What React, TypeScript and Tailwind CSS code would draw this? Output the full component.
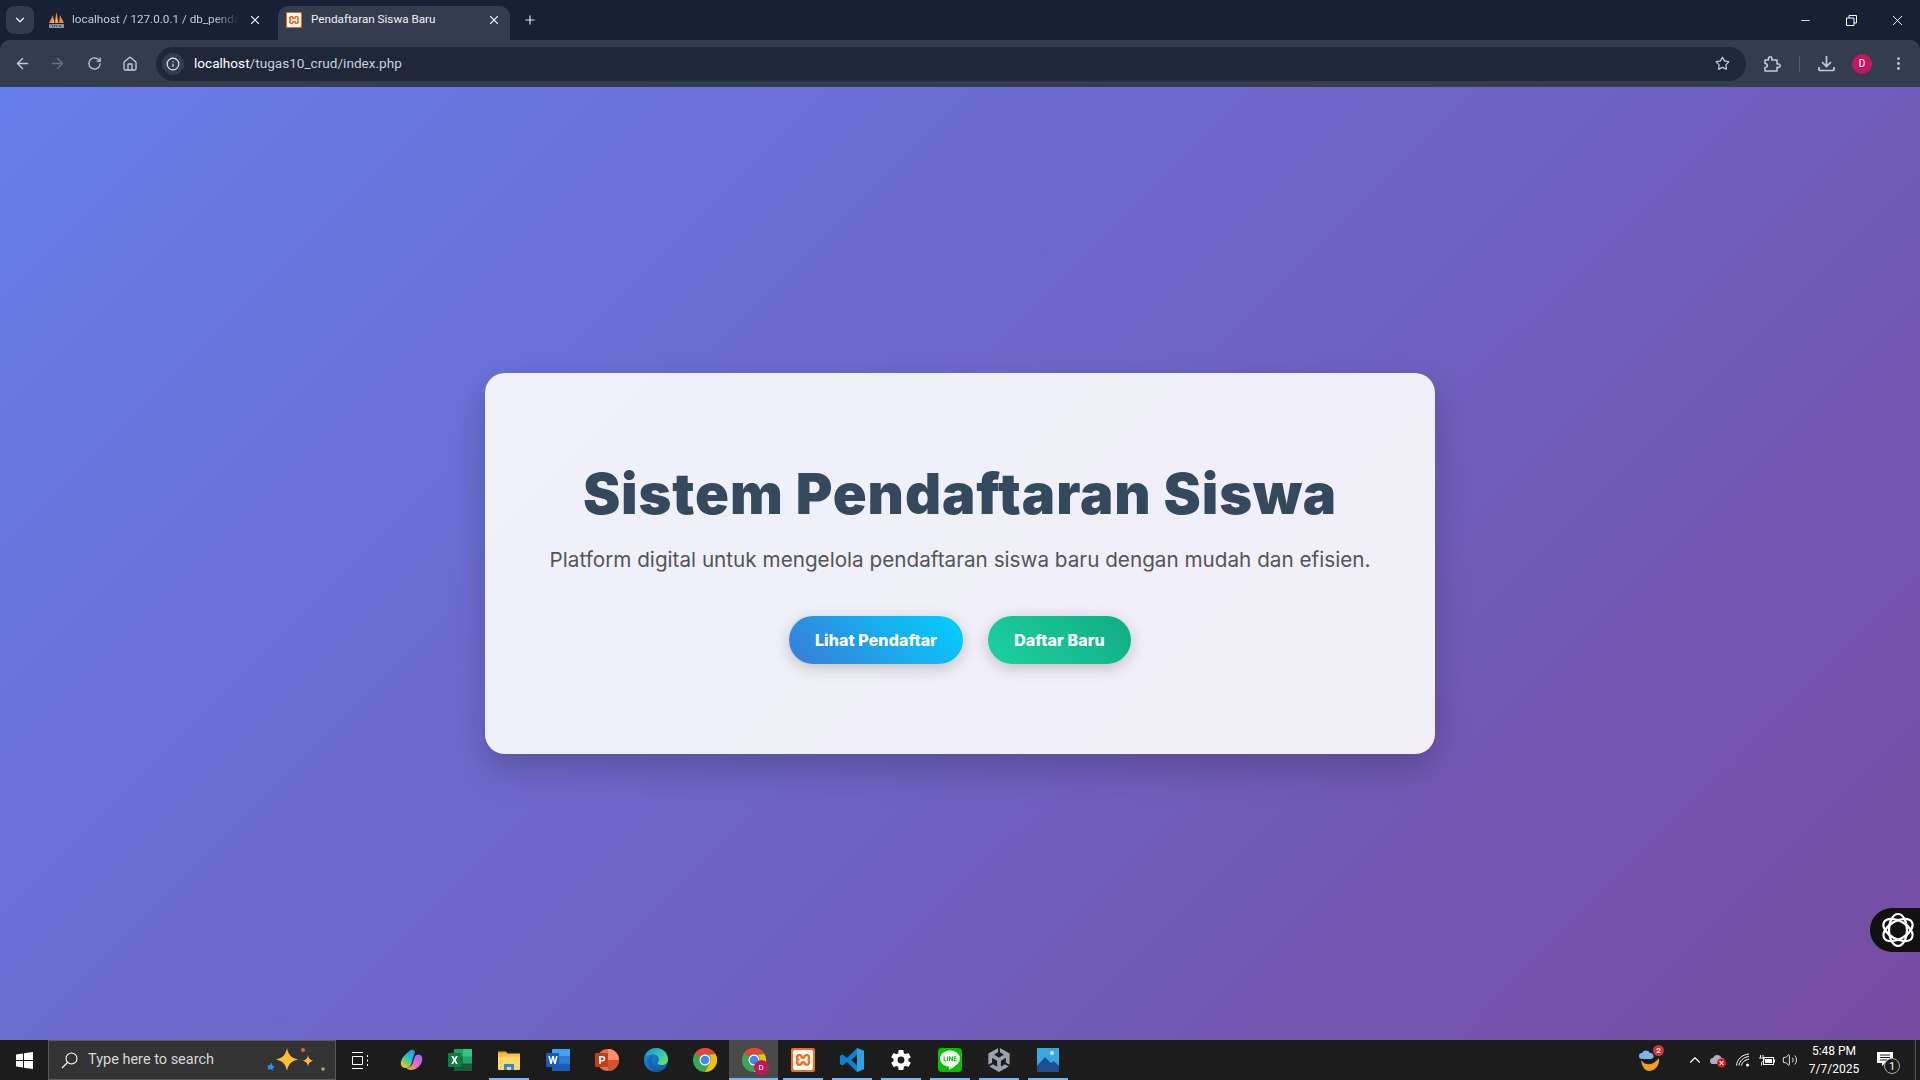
import { ArrowLeft, ArrowRight, ChevronDown, ChevronUp, EllipsisVertical, Home, Info, Minus, Plus, RotateCw, Star, Volume2, X } from 'lucide-react';
import { SiLine, SiUnity, SiXampp } from 'react-icons/si';
import { IoSettingsSharp } from 'react-icons/io5';
import type { ReactNode } from 'react';

const WinLogo = () => (
  <svg width="17" height="17" viewBox="0 0 17 17" fill="#fff">
    <path d="M0 2.400 7 1.400V8H0zM8 1.300 17 0V8H8zM0 9h7v6.600L0 14.600zM8 9h9v8L8 15.700z" />
  </svg>
);

const SearchGlass = () => (
  <svg width="17" height="17" viewBox="0 0 17 17" fill="none" stroke="#fff" strokeWidth="1.100">
    <circle cx="10.500" cy="6.500" r="5.500" />
    <path d="M6.500 10.500 1 16" />
  </svg>
);

const PmaIcon = () => (
  <svg width="17" height="17" viewBox="0 0 17 17">
    <path d="M1 11 5 3l1 8zM6.500 11 8.500 0l2 11zM11 11l1-8 4 8z" fill="#f08a24" />
    <path d="M4 11l1.500-5 .5 5zM8 11l.5-7 1 7z" fill="#f9c27d" />
    <rect x="1" y="12" width="15" height="4" rx="0.500" fill="#8d93a0" />
    <path d="M2.500 13h2v2M6.500 15v-2l1 1 1-1v2M11 15l1-2 1 2" stroke="#2d3340" strokeWidth="0.600" fill="none" />
  </svg>
);

const Sparkles = () => (
  <svg width="62" height="30" viewBox="0 0 62 30">
    <path d="M23 3c1.500 7 4 10 11 11.500-7 1.500-9.500 4.500-11 11.500-1.500-7-4-10-11-11.500 7-1.500 9.500-4.500 11-11.500z" fill="#fbc02d" />
    <path d="M44 10c.6 3.500 2 5 5.500 5.700-3.500.7-4.900 2.200-5.500 5.800-.6-3.600-2-5.100-5.500-5.800 3.500-.7 4.900-2.200 5.500-5.700z" fill="#fbc02d" />
    <path d="M3 21l3-1 1.500-2.500.8 3 2.700 1-2.300 1.500.2 3-2.400-2-3 .8 1-2.500z" fill="#1e9be8" />
    <circle cx="39" cy="5" r="2" fill="#e8642b" />
    <circle cx="59" cy="24" r="1.800" fill="#8cc63f" />
  </svg>
);

const TaskViewIcon = () => (
  <svg width="17" height="17" viewBox="0 0 17 17" fill="none" stroke="#fff" strokeWidth="1">
    <path d="M0 .5h11M0 16.500h11M.5 4.500h10v8H.5zM15.500 3v2M15.500 7.500v2M15.500 12v2" />
  </svg>
);

const CopilotIcon = () => (
  <svg width="24" height="24" viewBox="0 0 24 24">
    <defs>
      <linearGradient id="cop1" x1="0.8" y1="0" x2="0.2" y2="1">
        <stop offset="0" stopColor="#2b8ff0" />
        <stop offset="0.45" stopColor="#27c4c8" />
        <stop offset="0.8" stopColor="#9ed03a" />
        <stop offset="1" stopColor="#f6c42a" />
      </linearGradient>
      <linearGradient id="cop2" x1="0.6" y1="0" x2="0.3" y2="1">
        <stop offset="0" stopColor="#a66be8" />
        <stop offset="0.55" stopColor="#e868c0" />
        <stop offset="1" stopColor="#f8a04c" />
      </linearGradient>
    </defs>
    <path d="M10 3.500c1.500-2 5-2.500 6 0l-3 11c-.8 3-3.200 5.500-6.500 5.500-3.500 0-5.500-3-4.500-6.500C3 9.500 6.500 6 10 3.500z" fill="url(#cop1)" />
    <path d="M16 8c2-1.500 5-2 6.500 0 1.500 2.200.8 5.500-.7 8-1.800 3-5.800 6-9.800 6-2.300 0-4-1-4.800-2.500 2.800.4 5.500-1 6.800-5z" fill="url(#cop2)" />
    <path d="M13.500 9.500 16 8l-2.500 7c-.5 1.500-1.500 3-2.700 3.800 1-1.500 1.700-3.300 2.100-5z" fill="#3b2a9c" opacity="0.7" />
  </svg>
);

const ExcelIcon = () => (
  <svg width="24" height="24" viewBox="0 0 24 24">
    <rect x="6" y="1" width="18" height="22" rx="1" fill="#21a366" />
    <rect x="15" y="1" width="9" height="7.500" fill="#33c481" />
    <rect x="6" y="8" width="9" height="7.500" fill="#107c41" />
    <rect x="15" y="15.500" width="9" height="7.500" fill="#185c37" />
    <rect x="6" y="15.500" width="9" height="7.500" fill="#185c37" />
    <rect x="0" y="5" width="13" height="14" rx="1" fill="#107c41" />
    <path d="M3.300 8h2l1.300 2.500L8 8h1.900l-2.200 4 2.200 4H7.900l-1.400-2.600L5.100 16H3.200l2.200-4z" fill="#fff" />
  </svg>
);

const FolderIcon = () => (
  <svg width="24" height="24" viewBox="0 0 24 24">
    <path d="M1 3.500h8l2 2.500h-10z" fill="#e0a526" />
    <rect x="1" y="6" width="22" height="16" rx="1" fill="#fcd866" />
    <rect x="1" y="5.500" width="22" height="3" fill="#f5c242" />
    <path d="M7 22v-6h10v6h-3v-3h-4v3z" fill="#2b8fd6" />
  </svg>
);

const WordIcon = () => (
  <svg width="24" height="24" viewBox="0 0 24 24">
    <rect x="6" y="1" width="18" height="22" rx="1" fill="#41a5ee" />
    <rect x="6" y="8" width="18" height="7.500" fill="#2b7cd3" />
    <rect x="6" y="15.500" width="18" height="7.500" fill="#185abd" />
    <rect x="0" y="5" width="13" height="14" rx="1" fill="#185abd" />
    <path d="M2.300 8h1.700l1 5 1.200-5h1.500l1.200 5 1-5h1.700l-1.900 8H8.100L6.900 11l-1.200 5H4.200z" fill="#fff" />
  </svg>
);

const PowerPointIcon = () => (
  <svg width="24" height="24" viewBox="0 0 24 24">
    <circle cx="13" cy="12" r="11" fill="#ed6c47" />
    <path d="M13 1a11 11 0 0 1 11 11H13z" fill="#ff8f6b" />
    <path d="M13 12h11a11 11 0 0 1-11 11z" fill="#d35230" />
    <rect x="0" y="5" width="13" height="14" rx="1" fill="#c43e1c" />
    <path d="M4 8h3.300c2 0 3 1 3 2.700s-1.100 2.800-3 2.800H5.700V16H4zm1.700 1.400v2.700h1.300c1 0 1.500-.5 1.500-1.350S8 9.400 7 9.400z" fill="#fff" />
  </svg>
);

const EdgeIcon = () => (
  <svg width="24" height="24" viewBox="0 0 24 24">
    <defs>
      <linearGradient id="edge1" x1="0" y1="0" x2="1" y2="0.800">
        <stop offset="0" stopColor="#1a8fd8" />
        <stop offset="0.6" stopColor="#34c8b0" />
        <stop offset="1" stopColor="#6fe060" />
      </linearGradient>
      <linearGradient id="edge2" x1="0" y1="0" x2="0.7" y2="1">
        <stop offset="0" stopColor="#1f8fdc" />
        <stop offset="1" stopColor="#0f5fae" />
      </linearGradient>
    </defs>
    <circle cx="12" cy="12" r="12" fill="url(#edge2)" />
    <path d="M.6 9C2.300 3.500 7 0 12 0c7 0 12 5 12 11.500 0 3.500-3 5.500-6.500 5.500-2.500 0-4-.8-4-2 0-.9 1.500-1.300 1.500-3.300C15 8.500 12.500 6.500 9.500 6.500 5.500 6.500 2.500 7 .6 9z" fill="url(#edge1)" />
    <path d="M9.500 6.500c-3.500 1-5.500 4.500-5 8.500.6 5 4.500 8.500 9.500 8.800 2.500-.3 4.700-1.500 6.500-3.300-1.500.6-3 .8-4.500.5-4.500-.5-8-4-8-8 0-2.500 1-4.800 1.500-6.500z" fill="#0b4d96" opacity="0.35" />
  </svg>
);

const ChromeIcon = () => (
  <svg width="24" height="24" viewBox="0 0 24 24">
    <circle cx="12" cy="12" r="12" fill="#34a853" />
    <path d="M12 0a12 12 0 0 1 10.400 6H12a6 6 0 0 0-5.600 3.800L2.300 5A12 12 0 0 1 12 0z" fill="#ea4335" />
    <path d="M22.400 6A12 12 0 0 1 12 24l4.700-8.500A6 6 0 0 0 16 7z" fill="#fbbc04" />
    <circle cx="12" cy="12" r="5.500" fill="#fff" />
    <circle cx="12" cy="12" r="4.300" fill="#4285f4" />
  </svg>
);

const VsCodeIcon = () => (
  <svg width="24" height="24" viewBox="0 0 24 24">
    <path d="M17 0l7 3v18l-7 3-10-10-4.500 3.500L0 16V8l2.500-1.500L7 10zm0 6.500L11.500 12 17 17.500z" fill="#0a84d0" />
    <path d="M17 0l7 3v18l-7 3z" fill="#2aa3ea" />
  </svg>
);

const PhotosIcon = () => (
  <svg width="24" height="24" viewBox="0 0 24 24">
    <rect width="22" height="24" x="1" fill="#38a8e0" />
    <circle cx="16" cy="5" r="2" fill="#d8f0fb" />
    <path d="M1 18l8-9 6 6 3-2 5 5v6H1z" fill="#1c4f91" />
  </svg>
);

const Weather = () => (
  <span className="relative flex h-6 w-6 items-center justify-center">
    <svg width="24" height="24" viewBox="0 0 24 24">
      <path d="M3 12c4 6 12 6 18-2 1 7-4 13-10 13-4 0-7-4-8-11z" fill="#f59a23" />
      <path d="M1 8a3 3 0 0 1 3-3 4.500 4.500 0 0 1 8 0 3 3 0 0 1 1 6H4a3 3 0 0 1-3-3z" fill="#7fb4e8" />
    </svg>
    <span className="absolute top-[-3px] right-[-2px] flex h-[11px] w-[11px] items-center justify-center rounded-full bg-[#d13438] text-[8px] leading-none font-bold text-white">2</span>
  </span>
);

const CloudOff = () => (
  <svg width="18" height="16" viewBox="0 0 18 16">
    <path d="M1 9a3 3 0 0 1 3-3 4.500 4.500 0 0 1 8.500 0 3 3 0 0 1 .5 6H3a3 3 0 0 1-2-3z" fill="#aab0b8" />
    <circle cx="12.500" cy="11" r="4.500" fill="#e81123" />
    <path d="M10.700 9.200l3.600 3.600M14.300 9.200l-3.600 3.600" stroke="#fff" strokeWidth="1.200" />
  </svg>
);

const WifiArcs = () => (
  <svg width="14" height="14" viewBox="0 0 14 14" fill="none" stroke="#fff" strokeWidth="1">
    <path d="M.5 12.500C1 6.500 6 1.500 13 1M3 12.500C3.500 8 7.500 4 13 3.600M5.500 12.500C6 9.500 8.500 6.800 13 6.300" />
    <circle cx="11.500" cy="12" r="1.500" fill="#fff" stroke="none" />
  </svg>
);

const Battery = () => (
  <svg width="17" height="11" viewBox="0 0 17 11" fill="none" stroke="#fff">
    <path d="M2.500 0v3M5 0v3M1 3h5v2.500L3.500 7.500v3" strokeWidth="0.900" />
    <rect x="5.500" y="2.500" width="10" height="7" />
    <rect x="7" y="4" width="7" height="4" fill="#fff" stroke="none" />
    <path d="M16.500 4.500v3" />
  </svg>
);

const NotificationIcon = () => (
  <span className="relative flex h-6 w-6 items-center justify-center">
    <svg width="16" height="15" viewBox="0 0 16 15" className="mb-[2px]">
      <path d="M0 0h16v11H8l-3 3v-3H0z" fill="#fff" />
      <path d="M3 3h10M3 5.500h10M3 8h7" stroke="#1c1c1c" />
    </svg>
    <span className="absolute right-[-3px] bottom-[-2px] flex h-[16px] w-[16px] items-center justify-center rounded-full border border-[#aaa] bg-[#1c1c1c] text-[11px] leading-none text-white">1</span>
  </span>
);

const PuzzleOutline = () => (
  <svg width="18" height="18" viewBox="0 0 18 18" fill="none" stroke="#c3cbd9" strokeWidth="1.600" strokeLinejoin="round">
    <path d="M2 5h3.500V3.500a1.700 1.700 0 0 1 3.400 0V5H14v4h1.500a1.700 1.700 0 0 1 0 3.400H14V16H2v-3.500c1.500 0 2.300-.8 2.300-2S3.500 8.500 2 8.500z" />
  </svg>
);

const DownloadTray = () => (
  <svg width="17" height="17" viewBox="0 0 17 17" fill="none" stroke="#c3cbd9" strokeWidth="1.700">
    <path d="M8.500 1v10M4 7l4.500 4.500L13 7M1 12v2.500c0 .6.400 1 1 1h13c.6 0 1-.4 1-1V12" />
  </svg>
);

const WidgetIcon = () => (
  <svg width="36" height="36" viewBox="0 0 36 36" fill="none" stroke="#fff" strokeWidth="2.200">
    <ellipse cx="18" cy="18" rx="9" ry="16" />
    <ellipse cx="18" cy="18" rx="9" ry="16" transform="rotate(60 18 18)" />
    <ellipse cx="18" cy="18" rx="9" ry="16" transform="rotate(120 18 18)" />
  </svg>
);

const TaskItem = ({ children, running, active }: { children: ReactNode; running?: boolean; active?: boolean }) => (
  <div className={`relative flex h-10 w-[49px] items-center justify-center ${active ? 'bg-[#4a4a4a]' : ''}`}>
    {children}
    {running && <div className={`absolute bottom-0 h-[2px] bg-[#76b9ed] ${active ? 'inset-x-0' : 'inset-x-[4.5px]'}`} />}
  </div>
);

export default function App() {
  return (
    <div className="relative flex h-screen w-full flex-col overflow-hidden bg-[#172136] font-['Roboto',sans-serif]">
      {/* tab strip */}
      <div className="flex h-10 shrink-0 items-end pl-[6px] text-[#e3e8f0]">
        <div className="mb-[6px] flex h-7 w-7 items-center justify-center rounded-lg bg-[#323c4e]">
          <ChevronDown size={14} strokeWidth={2.500} />
        </div>
        <div className="ml-[2px] flex h-[34px] w-[242px] items-center pr-[14px] pb-[6px] pl-[12px]">
          <PmaIcon />
          <span className="ml-[7px] w-[167px] overflow-hidden text-[11.700px] whitespace-nowrap text-[#c4cad4] [mask-image:linear-gradient(90deg,#000_85%,transparent)]">localhost / 127.0.0.1 / db_pendaftaran</span>
          <X size={14} strokeWidth={2} className="ml-[9px]" />
        </div>
        <div className="flex h-[34px] w-[232px] items-center rounded-t-[10px] bg-[#343d4e] pr-[9px] pb-[6px] pl-[8px]">
          <span className="flex h-4 w-4 items-center justify-center rounded-[1px] bg-[#e8701f]">
            <SiXampp size={14} className="text-white" />
          </span>
          <span className="ml-[9px] flex-1 text-[11.700px] whitespace-nowrap text-[#eef1f6]">Pendaftaran Siswa Baru</span>
          <X size={14} strokeWidth={2} />
        </div>
        <div className="mb-[12px] ml-[13px] flex w-[14px] items-center justify-center">
          <Plus size={16} strokeWidth={2} />
        </div>
        <div className="ml-auto flex h-10 items-center text-white">
          <div className="flex w-[46px] justify-center"><Minus size={13} strokeWidth={1.500} /></div>
          <div className="flex w-[46px] justify-center">
            <svg width="11" height="11" viewBox="0 0 11 11" fill="none" stroke="#fff">
              <path d="M.5 3h7.500v7.500H.5zM3 3V.5h7.500V8H8" />
            </svg>
          </div>
          <div className="flex w-[46px] justify-center"><X size={17} strokeWidth={1.300} /></div>
        </div>
      </div>

      {/* toolbar */}
      <div className="flex h-[47px] shrink-0 items-center rounded-t-[10px] bg-[#343d4e] text-[#c3cbd9]">
        <div className="flex w-[156px] shrink-0 items-center">
          <ArrowLeft size={17} className="ml-[14px]" />
          <ArrowRight size={17} className="ml-[18px] text-[#69717f]" />
          <RotateCw size={15} className="ml-[21px]" />
          <Home size={16} className="ml-[20px]" />
        </div>
        <div className="flex h-[34px] w-[1590px] shrink-0 items-center rounded-full bg-[#1e2838] pr-4 pl-[6px]">
          <span className="flex h-[22px] w-[22px] items-center justify-center rounded-full bg-[#343d4e]">
            <Info size={14} className="text-[#e3e8f0]" />
          </span>
          <span className="ml-[10px] text-[13.600px] text-[#c9cfd9]"><span className="text-white">localhost</span>/tugas10_crud/index.php</span>
          <Star size={15} className="ml-auto" strokeWidth={2} />
        </div>
        <span className="ml-[17px] flex"><PuzzleOutline /></span>
        <div className="ml-[18px] h-4 w-px bg-[#566072]" />
        <span className="ml-[18px] flex"><DownloadTray /></span>
        <span className="ml-[17px] flex h-5 w-5 items-center justify-center rounded-full bg-[#c2185b] text-[10px] text-white">D</span>
        <EllipsisVertical size={17} className="ml-[18px]" />
      </div>

      {/* page */}
      <main className="flex min-h-0 flex-1 items-center justify-center bg-[linear-gradient(135deg,#667eea,#764ba2)] font-['Inter',sans-serif]">
        <div className="flex h-[381px] w-[950px] flex-col items-center rounded-[20px] bg-white/90 pt-[87px] shadow-[0_15px_35px_rgba(0,0,0,0.2)]">
          <h1 className="text-[56px] leading-[68px] font-black tracking-[0.9px] text-[#34495e]">Sistem Pendaftaran Siswa</h1>
          <p className="mt-[16px] text-[20.700px] leading-[32px] text-[#555]">Platform digital untuk mengelola pendaftaran siswa baru dengan mudah dan efisien.</p>
          <div className="mt-[40px] flex gap-[25px]">
            <a className="flex h-12 w-[174px] items-center justify-center rounded-full bg-[linear-gradient(45deg,#3a7bd5,#00d2ff)] text-[16px] font-extrabold tracking-[0.1px] text-white shadow-[0_4px_15px_rgba(0,0,0,0.2)]">Lihat Pendaftar</a>
            <a className="flex h-12 w-[143px] items-center justify-center rounded-full bg-[linear-gradient(45deg,#1dd1a1,#10ac84)] text-[16px] font-extrabold tracking-[0.1px] text-white shadow-[0_4px_15px_rgba(0,0,0,0.2)]">Daftar Baru</a>
          </div>
        </div>
      </main>

      {/* floating widget */}
      <div className="absolute top-[908px] right-0 flex h-[44px] w-[50px] items-center rounded-l-[22px] bg-[#111] pl-[10px]">
        <WidgetIcon />
      </div>

      {/* taskbar */}
      <div className="flex h-10 shrink-0 items-center bg-[#1c1c1c] text-white">
        <div className="flex w-[48px] justify-center"><WinLogo /></div>
        <div className="flex h-10 w-[288px] items-center border border-[#5a5a5a] bg-[#333] pr-[9px] pl-[12px]">
          <SearchGlass />
          <span className="ml-[10px] text-[14.500px] text-[#d8d8d8]">Type here to search</span>
          <span className="ml-auto"><Sparkles /></span>
        </div>
        <div className="flex">
          <TaskItem><TaskViewIcon /></TaskItem>
          <div className="flex pl-[1px]">
            <TaskItem><CopilotIcon /></TaskItem>
            <TaskItem><ExcelIcon /></TaskItem>
            <TaskItem running><FolderIcon /></TaskItem>
            <TaskItem><WordIcon /></TaskItem>
            <TaskItem><PowerPointIcon /></TaskItem>
            <TaskItem><EdgeIcon /></TaskItem>
            <TaskItem><ChromeIcon /></TaskItem>
            <TaskItem running active>
              <span className="relative flex">
                <ChromeIcon />
                <span className="absolute right-[-3px] bottom-[-3px] flex h-[15px] w-[15px] items-center justify-center rounded-full bg-[#c2185b] text-[8px] text-white">D</span>
              </span>
            </TaskItem>
            <TaskItem running>
              <span className="flex h-6 w-6 items-center justify-center rounded-[2px] bg-[#f0701f]"><SiXampp size={20} className="text-white" /></span>
            </TaskItem>
            <TaskItem running><VsCodeIcon /></TaskItem>
            <TaskItem running><IoSettingsSharp size={22} className="text-white" /></TaskItem>
            <TaskItem running>
              <span className="flex h-6 w-6 items-center justify-center rounded-[4px] bg-[#06c100]"><SiLine size={20} className="text-white" /></span>
            </TaskItem>
            <TaskItem running><SiUnity size={24} className="text-[#9aa3ad]" /></TaskItem>
            <TaskItem running><PhotosIcon /></TaskItem>
          </div>
        </div>
        <div className="ml-auto flex h-10 items-center">
          <Weather />
          <ChevronUp size={18} strokeWidth={1.500} className="ml-[24px]" />
          <span className="ml-[5px]"><CloudOff /></span>
          <span className="ml-[9px] flex"><WifiArcs /></span>
          <span className="ml-[8px] flex"><Battery /></span>
          <Volume2 size={16} strokeWidth={1.300} className="ml-[7px]" />
          <div className="ml-[13px] flex w-[46px] flex-col items-center text-[12px] leading-[18px] whitespace-nowrap">
            <span>5:48 PM</span>
            <span>7/7/2025</span>
          </div>
          <span className="ml-[16px]"><NotificationIcon /></span>
          <div className="ml-[18px] h-10 w-px bg-[#555]" />
          <div className="w-[4px]" />
        </div>
      </div>
    </div>
  );
}
